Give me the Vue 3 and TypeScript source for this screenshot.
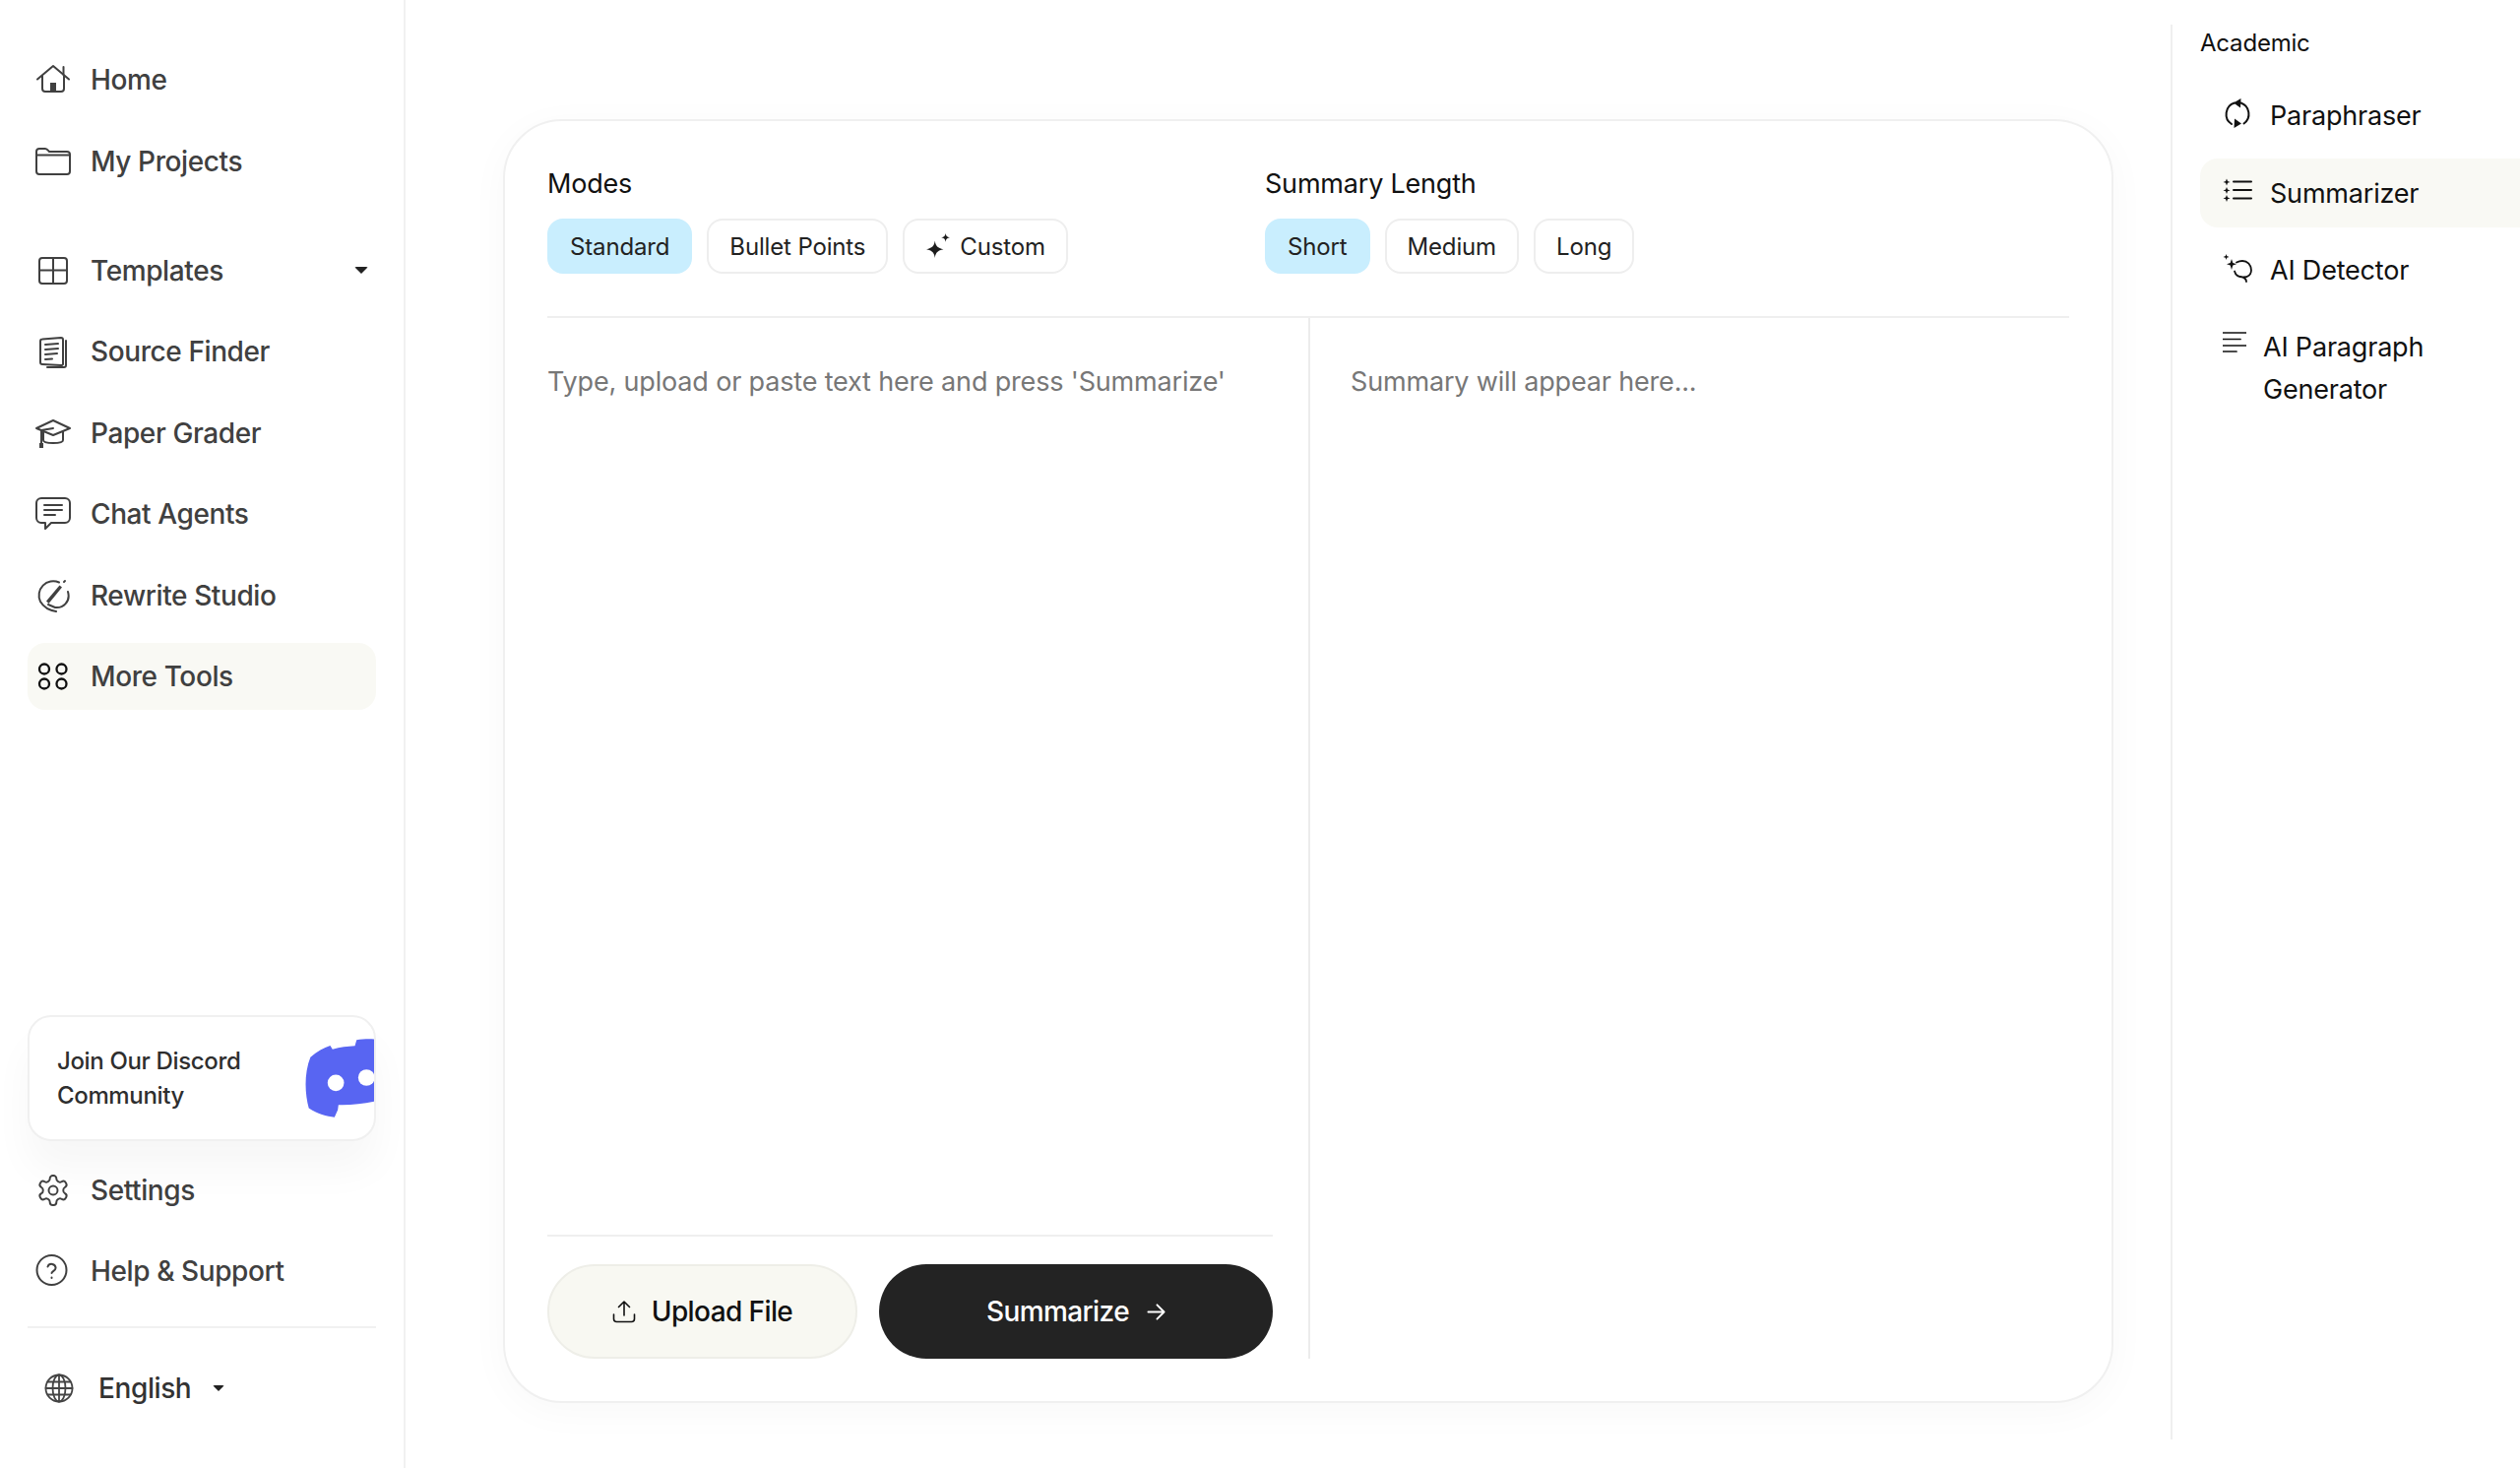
<script setup lang="ts">
interface Icon { vb?: number; sw?: number; s: string[]; f?: string[] }

const icons: Record<string, Icon> = {
  home: { s: ['M2 17.5 18 4l16 13.5', 'M7 14v13a3 3 0 0 0 3 3h16a3 3 0 0 0 3-3V14', 'M28.5 5v8'], f: ['M15 21h6v9h-6z'] },
  folder: { s: ['M1 11V8a3 3 0 0 1 3-3h6c2 0 3 2 4 3h18a3 3 0 0 1 3 3v17a3 3 0 0 1-3 3H4a3 3 0 0 1-3-3z', 'M1 11.5h34'] },
  grid: { s: ['M7 5h22a3 3 0 0 1 3 3v20a3 3 0 0 1-3 3H7a3 3 0 0 1-3-3V8a3 3 0 0 1 3-3z', 'M18 5v26', 'M4 17.5h28'] },
  doc: { s: ['M7 5.5 26 4a2 2 0 0 1 2 2v25a2 2 0 0 1-2 1L7 31a2 2 0 0 1-2-2V7.5a2 2 0 0 1 2-2z', 'M31 7v25a2 2 0 0 1-2 2H12', 'M10 11l13-1', 'M10 16l13-1', 'M10 21l12-1', 'M10 26l7-.5'] },
  cap: { s: ['M18 5 35 13l-17 7L1 13z', 'M8 16.5V25c0 4 20 4 20 0v-8.500', 'M6 15v13', 'M18 13 6 15'], f: ['M4 28h4v5H4z'] },
  chat: { s: ['M6 2h24a5 5 0 0 1 5 5v15a5 5 0 0 1-5 5H16l-6 6v-6H6a5 5 0 0 1-5-5V7a5 5 0 0 1 5-5z', 'M9 9h18', 'M9 14h18', 'M9 19h11'] },
  rewrite: { s: ['M24 4.500A14.500 14.500 0 0 0 5 24c3 5 9 9 16 10', 'M33 14c3 10-5 17-13 16l-7-3', 'M30 3l-1 1'], f: ['M11 23.500 24.500 7.500l2.500 2L13.500 26z'] },
  tools: { sw: 2.300, s: ['M14 10.500a5 5 0 1 1-10 0 5 5 0 0 1 10 0z', 'M31.500 10.500a5 5 0 1 1-10 0 5 5 0 0 1 10 0z', 'M14 25.500a5 5 0 1 1-10 0 5 5 0 0 1 10 0z', 'M31.500 25.500a5 5 0 1 1-10 0 5 5 0 0 1 10 0z'] },
  gear: { vb: 24, sw: 1.300, s: ['M12.220 2h-.44a2 2 0 0 0-2 2v.18a2 2 0 0 1-1 1.730l-.43.25a2 2 0 0 1-2 0l-.15-.08a2 2 0 0 0-2.730.73l-.22.38a2 2 0 0 0 .73 2.730l.15.1a2 2 0 0 1 1 1.720v.51a2 2 0 0 1-1 1.740l-.15.09a2 2 0 0 0-.73 2.730l.22.38a2 2 0 0 0 2.730.73l.15-.08a2 2 0 0 1 2 0l.43.25a2 2 0 0 1 1 1.730V20a2 2 0 0 0 2 2h.44a2 2 0 0 0 2-2v-.18a2 2 0 0 1 1-1.730l.43-.25a2 2 0 0 1 2 0l.15.08a2 2 0 0 0 2.730-.73l.22-.39a2 2 0 0 0-.73-2.730l-.15-.08a2 2 0 0 1-1-1.740v-.5a2 2 0 0 1 1-1.740l.15-.09a2 2 0 0 0 .73-2.730l-.22-.38a2 2 0 0 0-2.730-.73l-.15.08a2 2 0 0 1-2 0l-.43-.25a2 2 0 0 1-1-1.730V4a2 2 0 0 0-2-2z', 'M15 12a3 3 0 1 1-6 0 3 3 0 0 1 6 0z'] },
  help: { s: ['M31.500 17a15 15 0 1 1-30 0 15 15 0 0 1 30 0z', 'M12.500 13.500a4.200 4.200 0 0 1 8.100 1.300c0 2.800-4.100 3.600-4.100 5.200', 'M16.500 24.500v.5'] },
}

const topNav = [{ label: 'Home', icon: 'home' }, { label: 'My Projects', icon: 'folder' }]
const mainNav = [
  { label: 'Templates', icon: 'grid', caret: true },
  { label: 'Source Finder', icon: 'doc' },
  { label: 'Paper Grader', icon: 'cap' },
  { label: 'Chat Agents', icon: 'chat' },
  { label: 'Rewrite Studio', icon: 'rewrite' },
  { label: 'More Tools', icon: 'tools', active: true },
]
const footNav = [{ label: 'Settings', icon: 'gear' }, { label: 'Help & Support', icon: 'help' }]
const modes = ['Standard', 'Bullet Points']
const lengths = ['Short', 'Medium', 'Long']
</script>

<template>
  <div class="page">
    <aside class="sidebar">
      <nav class="group">
        <a v-for="n in topNav" :key="n.label" class="row">
          <svg class="ico" :viewBox="`0 0 ${icons[n.icon].vb ?? 36} ${icons[n.icon].vb ?? 36}`" :stroke-width="icons[n.icon].sw ?? 2">
            <path v-for="d in icons[n.icon].s" :key="d" :d="d" />
            <path v-for="d in icons[n.icon].f ?? []" :key="d" :d="d" class="solid" />
          </svg>
          <span>{{ n.label }}</span>
        </a>
      </nav>
      <nav class="group second">
        <a v-for="n in mainNav" :key="n.label" class="row" :class="{ active: n.active }">
          <svg class="ico" :viewBox="`0 0 ${icons[n.icon].vb ?? 36} ${icons[n.icon].vb ?? 36}`" :stroke-width="icons[n.icon].sw ?? 2">
            <path v-for="d in icons[n.icon].s" :key="d" :d="d" />
            <path v-for="d in icons[n.icon].f ?? []" :key="d" :d="d" class="solid" />
          </svg>
          <span>{{ n.label }}</span>
          <i v-if="n.caret" class="caret end"></i>
        </a>
      </nav>

      <div class="foot">
        <div class="discord">
          <p>Join Our Discord<br />Community</p>
          <svg class="discord-logo" viewBox="920 125 230 260">
            <path fill="#5865f2" d="M945 190 C965 172 985 162 1005 155 L1012 166 C1035 160 1058 157 1080 156 L1085 138 C1105 134 1130 134 1150 136 L1150 322 C1110 332 1070 336 1030 335 L1028 350 L1018 372 C995 370 965 362 940 345 C928 300 925 240 945 190 Z" />
            <circle cx="1022" cy="268" r="25" fill="#fff" />
            <circle cx="1115" cy="252" r="25" fill="#fff" />
          </svg>
        </div>
        <nav class="group foot-nav">
          <a v-for="n in footNav" :key="n.label" class="row">
            <svg class="ico" :viewBox="`0 0 ${icons[n.icon].vb ?? 36} ${icons[n.icon].vb ?? 36}`" :stroke-width="icons[n.icon].sw ?? 2">
              <path v-for="d in icons[n.icon].s" :key="d" :d="d" />
            </svg>
            <span>{{ n.label }}</span>
          </a>
        </nav>
        <div class="lang">
          <svg class="globe" viewBox="0 0 30 30" stroke-width="1.800">
            <circle cx="15" cy="15" r="13.500" />
            <ellipse cx="15" cy="15" rx="6.500" ry="13.500" />
            <path d="M15 1.500v27M1.500 15h27M3.500 8.500h23M3.500 21.500h23" />
          </svg>
          <span>English</span>
          <i class="caret small"></i>
        </div>
      </div>
    </aside>

    <main class="main">
      <section class="card">
        <header class="head">
          <div class="opt">
            <h2>Modes</h2>
            <div class="chips">
              <button v-for="(m, i) in modes" :key="m" class="chip" :class="{ on: i === 0 }">{{ m }}</button>
              <button class="chip">
                <svg class="spark" viewBox="0 0 24 24">
                  <path class="solid" d="M9 7c.6 4.800 2.700 7 8 8-5.300 1-7.400 3.200-8 8-.6-4.800-2.700-7-8-8 5.300-1 7.400-3.200 8-8z" />
                  <path class="solid" d="M19 0c.4 2.600 1.400 3.600 4 4-2.600.4-3.600 1.400-4 4-.4-2.600-1.400-3.600-4-4 2.600-.4 3.600-1.400 4-4z" />
                </svg>
                Custom
              </button>
            </div>
          </div>
          <div class="opt">
            <h2>Summary Length</h2>
            <div class="chips">
              <button v-for="(m, i) in lengths" :key="m" class="chip" :class="{ on: i === 0 }">{{ m }}</button>
            </div>
          </div>
        </header>

        <div class="panes">
          <div class="pane-in">
            <p class="hint">Type, upload or paste text here and press 'Summarize'</p>
            <div class="actions">
              <button class="btn upload">
                <svg viewBox="0 0 24 24" class="bico" stroke-width="1.600">
                  <path d="M12 16V2M6.500 7.500 12 2l5.500 5.500M1.500 15v4.500a3 3 0 0 0 3 3h15a3 3 0 0 0 3-3V15" />
                </svg>
                Upload File
              </button>
              <button class="btn go">
                Summarize
                <svg viewBox="0 0 20 20" class="bico arrow" stroke-width="2">
                  <path d="M1.500 10h17M11 2.500l7.500 7.500-7.500 7.500" />
                </svg>
              </button>
            </div>
          </div>
          <div class="pane-out">
            <p class="hint">Summary will appear here...</p>
          </div>
        </div>
      </section>
    </main>

    <aside class="tools">
      <h3>Academic</h3>
      <a class="tool">
        <svg class="tico" viewBox="0 0 30 30" stroke-width="2">
          <path d="M12 4.500A12 12 0 0 0 9 26M18.500 4.500A12 12 0 0 1 21.500 25.500" />
          <path class="solid" d="M18.500 0l-.5 9.500-7-5zM11.500 30l.5-9.500 7 5z" />
        </svg>
        <span>Paraphraser</span>
      </a>
      <a class="tool active">
        <svg class="tico" viewBox="0 0 30 30" stroke-width="2">
          <path d="M11 6.500h18M11 15h18M11 23.500h18" />
          <path class="solid" d="M4 3.500l1 2.500 2.500 1-2.500.8L4 10.500 3 7.800.5 7 3 6zM4 12l1 2.500 2.500 1-2.500.8L4 19l-1-2.700-2.500-.8L3 14.500zM4 20l1 2.500 2.500 1-2.500.8L4 27l-1-2.700-2.500-.8L3 22.500z" />
        </svg>
        <span>Summarizer</span>
      </a>
      <a class="tool">
        <svg class="tico" viewBox="0 0 30 30" stroke-width="1.800">
          <path d="M14 9.500c2-1 4-1.500 6-1.500 5 0 9 4 9 9.500 0 4-3 7-8 7-4 0-8-2-9-6M18 24c3 .5 6 2 6 5" />
          <path class="solid" d="M9 6l1.300 4 3.700 1.300-3.700 1.200L9 17l-1.300-4.500L4 11.300 7.700 10zM3.500 1l.7 2.100 2.300.9-2.300.8-.7 2.200-.7-2.200L.5 4l2.300-.9z" />
        </svg>
        <span>AI Detector</span>
      </a>
      <a class="tool para">
        <svg class="tico" viewBox="0 0 24 24" stroke-width="1.700">
          <path d="M0 2h24M0 8.500h18M0 15h24M0 21h14" />
        </svg>
        <span>AI Paragraph<br />Generator</span>
      </a>
    </aside>
  </div>
</template>

<style>
html, body { margin: 0; background: #fff; }
</style>

<style scoped>
.page {
  display: flex;
  height: 1491px;
  overflow: hidden;
  font-family: Inter, "Liberation Sans", sans-serif;
  color: #222;
  background: #fff;
}
svg { fill: none; stroke: currentColor; stroke-linecap: round; stroke-linejoin: round; flex: none; }
.solid { fill: currentColor; stroke: none; }

.sidebar {
  width: 412px;
  box-sizing: border-box;
  flex: none;
  border-right: 2px solid #f1f1f1;
  padding: 47px 28px 47px 28px;
  display: flex;
  flex-direction: column;
}
.group { display: flex; flex-direction: column; gap: 14.5px; }
.second { margin-top: 43px; }
.row {
  height: 68px;
  flex: none;
  display: flex;
  align-items: center;
  gap: 20px;
  padding: 0 8px;
  border-radius: 18px;
  font-size: 28px;
  font-weight: 450;
  letter-spacing: -0.4px;
  color: #404040;
}
.row.active { background: #f9f9f4; }
.ico { width: 36px; height: 36px; }
.row.active .ico { color: #111; }
.caret {
  display: block;
  width: 0;
  height: 0;
  border-left: 7px solid transparent;
  border-right: 7px solid transparent;
  border-top: 7px solid #222;
  border-radius: 2px;
}
.caret.end { margin-left: auto; }
.caret.small { border-left-width: 6px; border-right-width: 6px; border-top-width: 6px; margin-left: 22px; }

.foot { margin-top: auto; display: flex; flex-direction: column; }
.discord {
  height: 128px;
  box-sizing: border-box;
  position: relative;
  overflow: hidden;
  border: 2px solid #f0f0f0;
  border-radius: 24px;
  background: #fff;
  padding: 0 0 0 28px;
  display: flex;
  align-items: center;
  box-shadow: 0 30px 40px rgba(0, 0, 0, 0.035);
  z-index: 1;
}
.discord p { margin: 0; font-size: 24px; line-height: 35px; font-weight: 450; letter-spacing: -0.35px; color: #2e2e2e; }
.discord-logo { position: absolute; left: 277px; top: 19px; width: 77px; height: 87px; stroke: none; }
.foot-nav { margin-top: 16px; }
.lang {
  margin-top: 22px;
  border-top: 2px solid #f1f1f1;
  padding: 27px 0 0 17px;
  height: 68px;
  display: flex;
  align-items: center;
  font-size: 28px;
  font-weight: 450;
  letter-spacing: -0.4px;
  color: #333;
}
.globe { width: 30px; height: 30px; margin-right: 25px; color: #444; }

.main { flex: 1; min-width: 0; padding: 121px 58px 66px 99px; display: flex; }
.card {
  flex: 1;
  min-width: 0;
  box-sizing: border-box;
  border: 2px solid #f0f0f0;
  border-radius: 60px;
  background: #fff;
  box-shadow: 0 8px 40px rgba(0, 0, 0, 0.03);
  padding: 0 43px 43px;
  display: flex;
  flex-direction: column;
}
.head { height: 200px; flex: none; display: grid; grid-template-columns: 729px 1fr; border-bottom: 2px solid #efefef; box-sizing: border-box; }
.opt { padding-top: 45px; }
.opt h2 { margin: 0 0 16px; font-size: 27px; line-height: 38px; font-weight: 400; letter-spacing: -0.2px; color: #111; }
.chips { display: flex; gap: 15px; }
.chip {
  height: 56px;
  box-sizing: border-box;
  padding: 0 21px;
  border: 2px solid #eee;
  border-radius: 16px;
  background: #fff;
  font: inherit;
  font-size: 24px;
  letter-spacing: -0.15px;
  color: #222;
  display: flex;
  align-items: center;
  gap: 9px;
}
.chip.on { background: #c9eefe; border-color: #c9eefe; }
.spark { width: 26px; height: 26px; color: #1c1c1c; }

.panes { flex: 1; min-height: 0; display: flex; }
.pane-in {
  width: 775px;
  flex: none;
  box-sizing: border-box;
  padding-right: 36px;
  border-right: 2px solid #ececec;
  display: flex;
  flex-direction: column;
}
.pane-out { flex: 1; padding-left: 41px; }
.hint { margin: 46px 0 0; font-size: 27px; line-height: 38px; letter-spacing: -0.17px; color: #777; }
.actions {
  margin-top: auto;
  border-top: 2px solid #efefef;
  padding-top: 28px;
  display: flex;
  gap: 22px;
}
.btn {
  height: 96px;
  border-radius: 48px;
  font: inherit;
  font-size: 28px;
  font-weight: 450;
  letter-spacing: -0.6px;
  display: flex;
  align-items: center;
  justify-content: center;
  box-sizing: border-box;
}
.upload { width: 315px; background: #f8f8f2; border: 2px solid #eeeee8; color: #111; gap: 16px; }
.go { flex: 1; background: #232323; border: none; color: #fff; gap: 18px; }
.bico { width: 24px; height: 24px; }
.arrow { width: 19px; height: 19px; }

.tools {
  width: 355px;
  flex: none;
  box-sizing: border-box;
  margin: 25px 0 29px;
  border-left: 2px solid #efefef;
  padding-left: 28px;
  display: flex;
  flex-direction: column;
  gap: 8.5px;
  color: #111;
}
.tools h3 { margin: 0 0 11px; font-size: 24px; line-height: 38px; font-weight: 400; letter-spacing: -0.2px; }
.tool {
  min-height: 70px;
  display: flex;
  align-items: center;
  gap: 18px;
  padding-left: 23px;
  border-radius: 18px 0 0 18px;
  font-size: 27px;
  letter-spacing: -0.2px;
}
.tool.active { background: #f9f9f4; }
.tico { width: 30px; height: 30px; margin-bottom: 6px; }
.tool.para { align-items: flex-start; gap: 17px; padding-top: 14px; line-height: 42.5px; }
.tool.para .tico { width: 24px; height: 24px; margin: 4px 0 0; }
</style>
